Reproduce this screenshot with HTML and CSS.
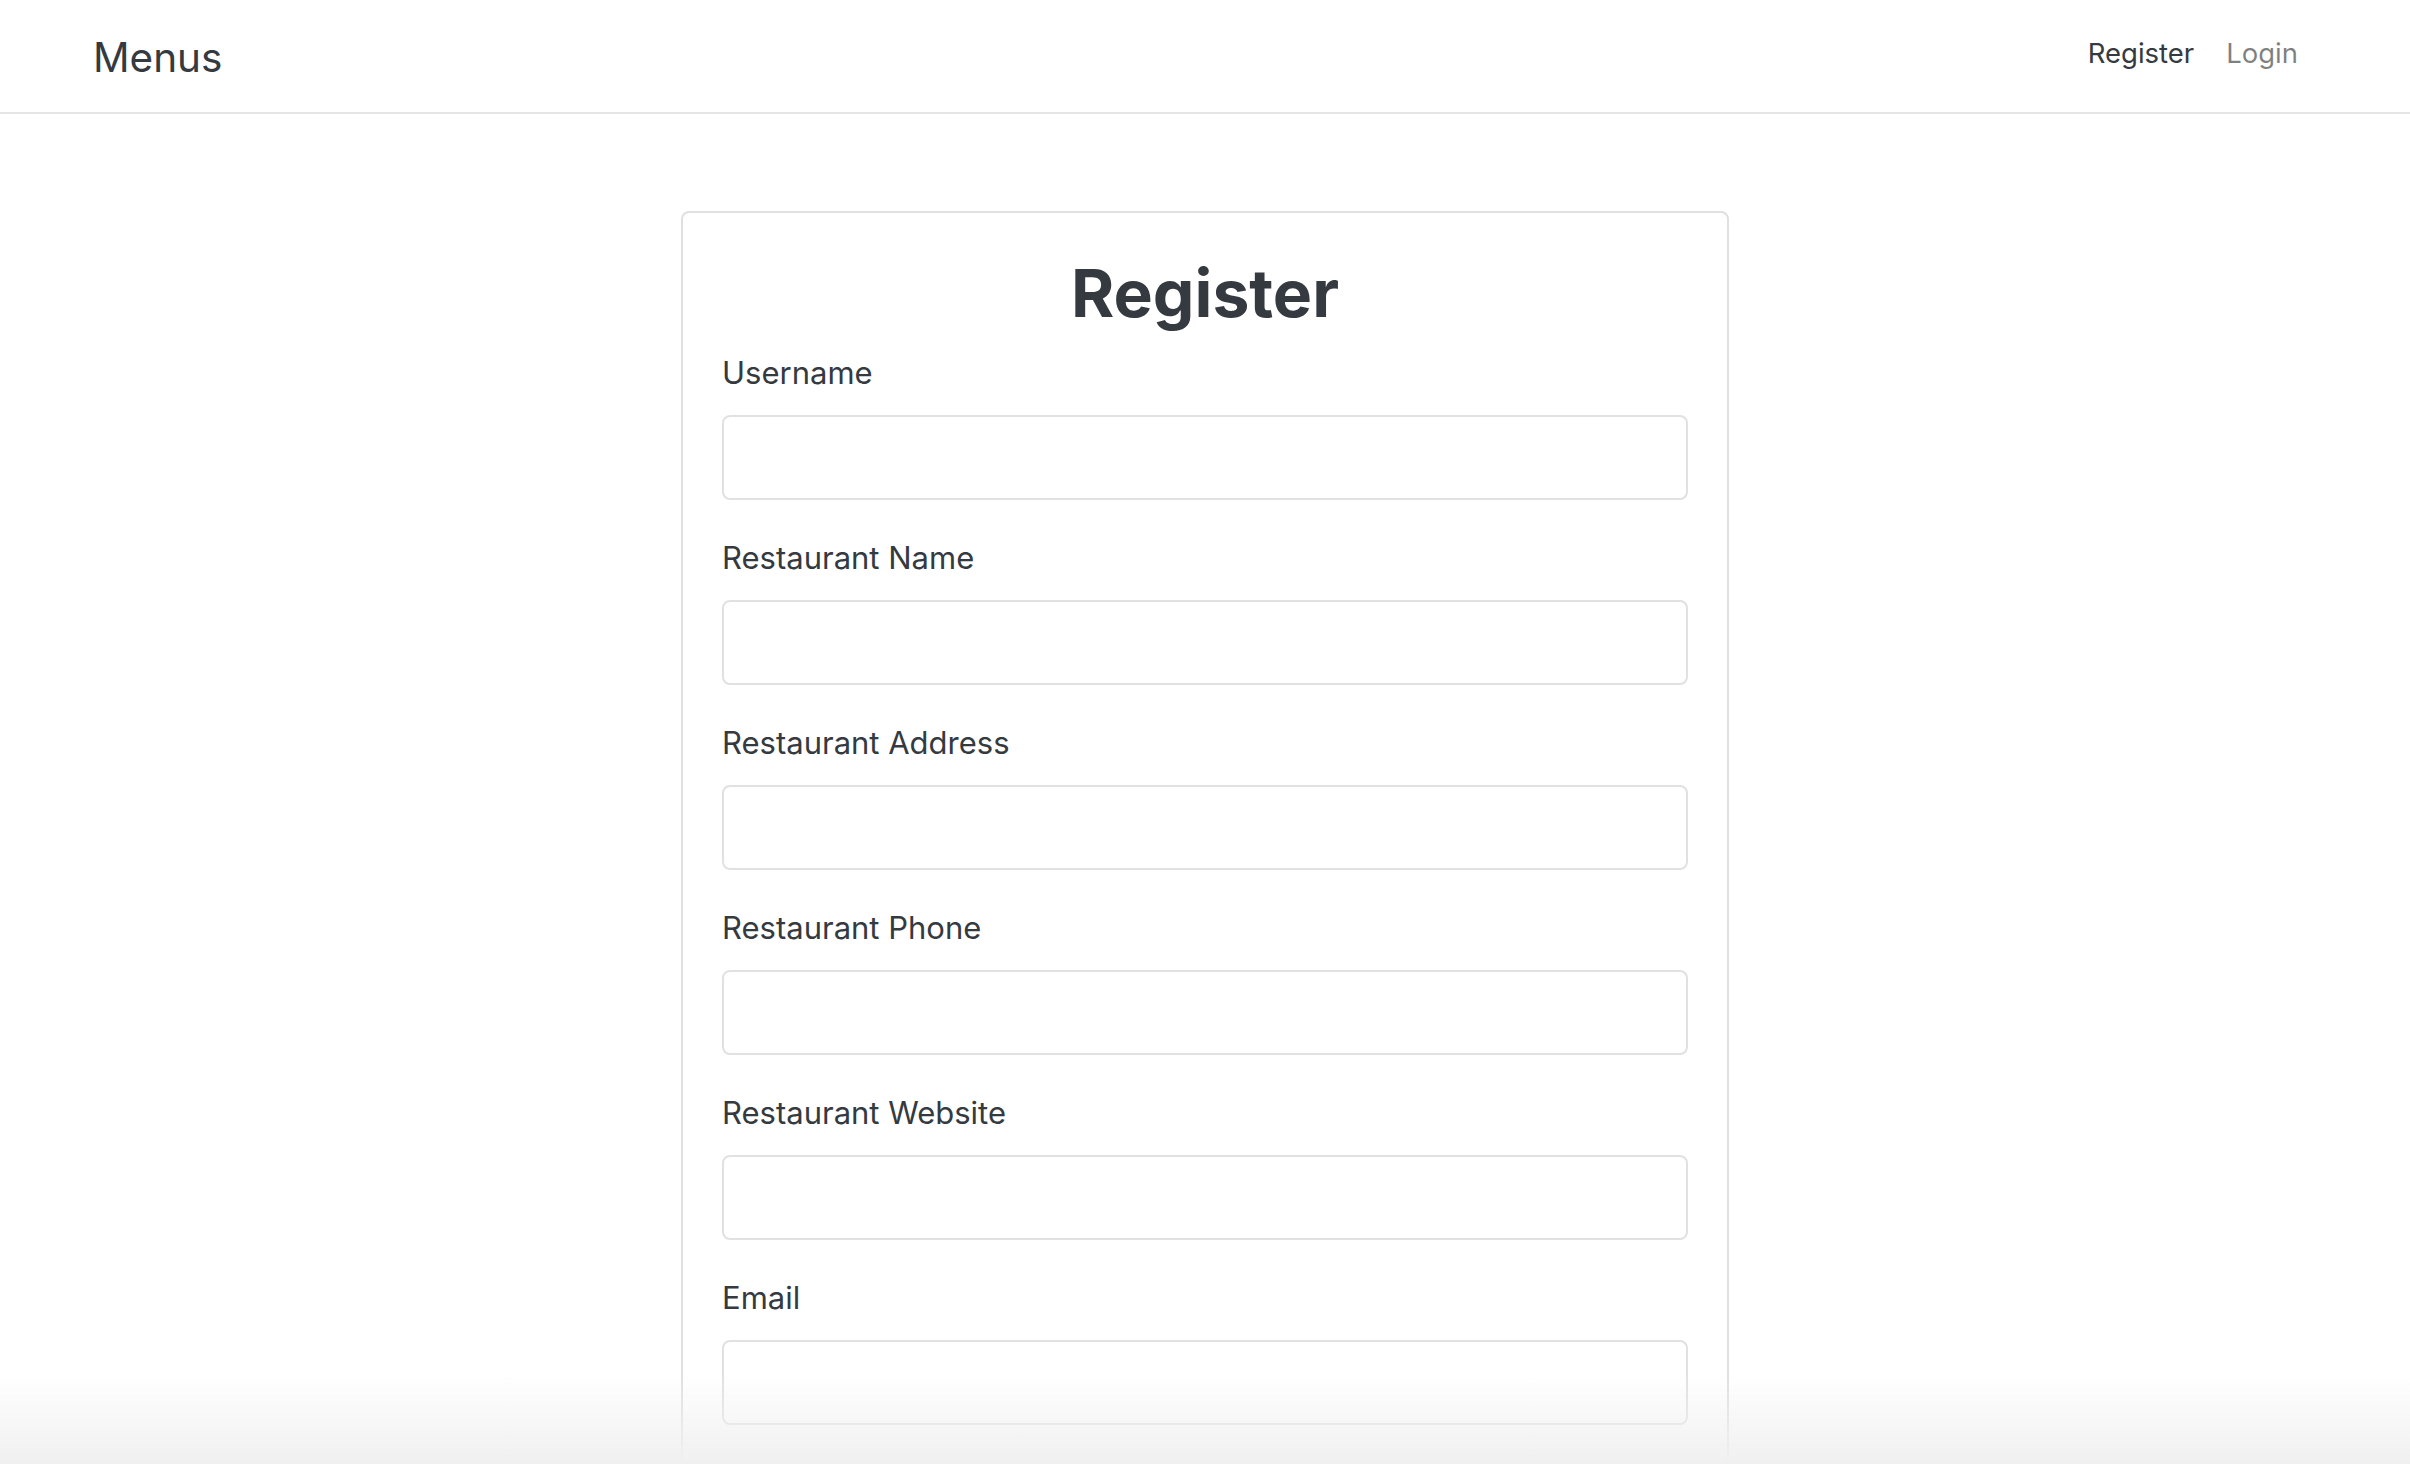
FILE: index.html
```html
<!DOCTYPE html>
<html lang="en">
<head>
<meta charset="utf-8">
<title>Menus - Register</title>
<link rel="stylesheet" href="styles.css">
</head>
<body>
<nav class="navbar">
  <a class="brand" href="#">Menus</a>
  <div class="nav-links">
    <a class="nav-link active" href="#">Register</a>
    <a class="nav-link" href="#">Login</a>
  </div>
</nav>
<main class="main">
  <div class="card">
    <h2 class="card-title">Register</h2>
    <form class="form">
      <div class="form-group">
        <label class="label">Username</label>
        <input class="input" type="text">
      </div>
      <div class="form-group">
        <label class="label">Restaurant Name</label>
        <input class="input" type="text">
      </div>
      <div class="form-group">
        <label class="label">Restaurant Address</label>
        <input class="input" type="text">
      </div>
      <div class="form-group">
        <label class="label">Restaurant Phone</label>
        <input class="input" type="text">
      </div>
      <div class="form-group">
        <label class="label">Restaurant Website</label>
        <input class="input" type="text">
      </div>
      <div class="form-group">
        <label class="label">Email</label>
        <input class="input" type="email">
      </div>
    </form>
  </div>
</main>
<div class="bottom-fade"></div>
</body>
</html>
```
FILE: styles.css
```css
* { box-sizing: border-box; }
html, body { margin: 0; padding: 0; }
body {
  font-family: Inter, "Noto Sans", "Liberation Sans", sans-serif;
  color: #343a40;
  background: #fff;
}
.navbar {
  height: 114px;
  border-bottom: 2px solid #e5e5e5;
  display: flex;
  align-items: center;
  justify-content: space-between;
  padding: 0 96px 0 93px;
}
.brand {
  font-size: 40.5px;
  color: #343a40;
  text-decoration: none;
  line-height: 1;
  padding-top: 4px;
}
.nav-links {
  display: flex;
  align-items: center;
}
.nav-link {
  font-size: 27.5px;
  padding: 0 16px;
  color: rgba(0,0,0,0.5);
  text-decoration: none;
  line-height: 1;
  margin-top: -4px;
}
.nav-link.active { color: #343a40; }
.main {
  display: flex;
  justify-content: center;
  padding-top: 97px;
}
.card {
  width: 1048px;
  border: 2px solid #e0e0e0;
  border-radius: 8px;
  padding: 41px 39px 120px;
}
.card-title {
  margin: 0 0 16px;
  text-align: center;
  font-size: 66px;
  font-weight: 700;
  line-height: 1.2;
}
.form-group { margin-bottom: 34px; }
.label {
  display: block;
  font-size: 31px;
  line-height: 48px;
  margin-bottom: 18px;
}
.input {
  display: block;
  width: 100%;
  height: 85px;
  border: 2px solid #e1e1e1;
  border-radius: 8px;
  background: #fff;
  font: inherit;
}
.bottom-fade {
  position: fixed;
  left: 0;
  right: 0;
  bottom: 0;
  height: 90px;
  background: linear-gradient(to bottom, rgba(240,240,240,0), rgba(240,240,240,1));
  pointer-events: none;
}
```
